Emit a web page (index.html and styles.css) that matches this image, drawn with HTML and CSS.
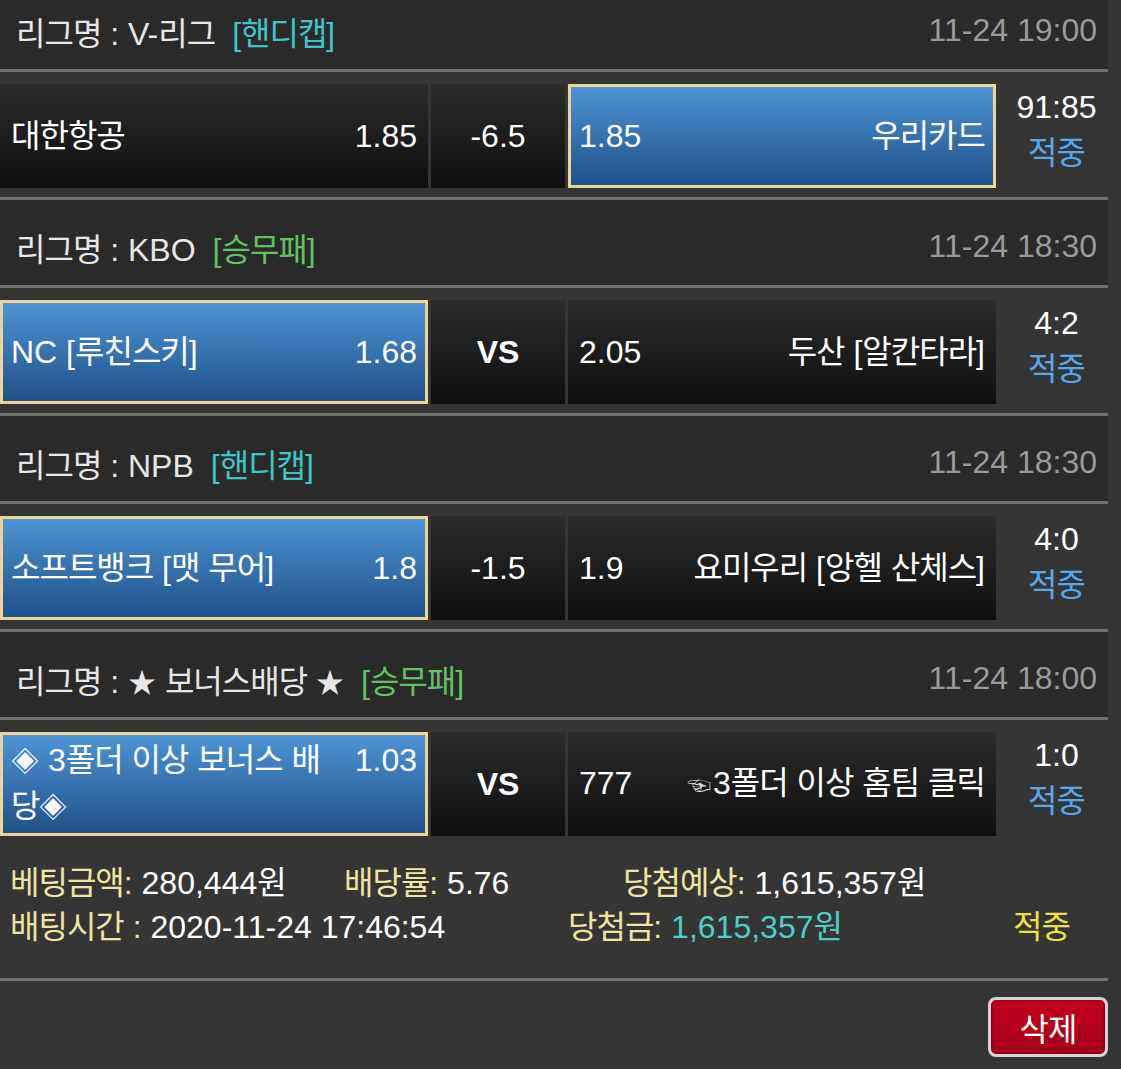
FILE: index.html
```html
<!DOCTYPE html>
<html lang="ko">
<head>
  <meta charset="UTF-8">
  <meta name="viewport" content="width=device-width, initial-scale=1.0">
  <title>베팅내역</title>
  <link rel="stylesheet" href="styles.css">
</head>
<body>
  <div class="slip">
    <div class="games">
      <div class="game">
        <div class="league">
          <span class="lname"><span class="k">리그명</span> : V-<span class="k">리그</span></span>
          <span class="kind hd">[<span class="k">핸디캡</span>]</span>
          <span class="time">11-24 19:00</span>
        </div>
        <div class="match">
          <div class="cell team">
            <div class="inner"><span class="name k">대한항공</span><span class="odds">1.85</span></div>
          </div>
          <div class="cell line">-6.5</div>
          <div class="cell team sel">
            <div class="inner"><span class="odds">1.85</span><span class="name k">우리카드</span></div>
          </div>
          <div class="result"><span class="score">91:85</span><span class="hit k">적중</span></div>
        </div>
      </div>

      <div class="game">
        <div class="league">
          <span class="lname"><span class="k">리그명</span> : KBO</span>
          <span class="kind wdl">[<span class="k">승무패</span>]</span>
          <span class="time">11-24 18:30</span>
        </div>
        <div class="match">
          <div class="cell team sel">
            <div class="inner"><span class="name">NC [<span class="k">루친스키</span>]</span><span class="odds">1.68</span></div>
          </div>
          <div class="cell line vs">VS</div>
          <div class="cell team">
            <div class="inner"><span class="odds">2.05</span><span class="name"><span class="k">두산</span> [<span class="k">알칸타라</span>]</span></div>
          </div>
          <div class="result"><span class="score">4:2</span><span class="hit k">적중</span></div>
        </div>
      </div>

      <div class="game">
        <div class="league">
          <span class="lname"><span class="k">리그명</span> : NPB</span>
          <span class="kind hd">[<span class="k">핸디캡</span>]</span>
          <span class="time">11-24 18:30</span>
        </div>
        <div class="match">
          <div class="cell team sel">
            <div class="inner"><span class="name"><span class="k">소프트뱅크</span> [<span class="k">맷</span> <span class="k">무어</span>]</span><span class="odds">1.8</span></div>
          </div>
          <div class="cell line">-1.5</div>
          <div class="cell team">
            <div class="inner"><span class="odds">1.9</span><span class="name"><span class="k">요미우리</span> [<span class="k">앙헬</span> <span class="k">산체스</span>]</span></div>
          </div>
          <div class="result"><span class="score">4:0</span><span class="hit k">적중</span></div>
        </div>
      </div>

      <div class="game">
        <div class="league">
          <span class="lname"><span class="k">리그명</span> : <span class="sym">★</span> <span class="k">보너스배당</span> <span class="sym">★</span></span>
          <span class="kind wdl">[<span class="k">승무패</span>]</span>
          <span class="time">11-24 18:00</span>
        </div>
        <div class="match">
          <div class="cell team sel">
            <div class="inner bonus"><span class="name"><span class="sym">◈</span> 3<span class="k">폴더</span> <span class="k">이상</span> <span class="k">보너스</span> <span class="k">배당</span><span class="sym">◈</span></span><span class="odds">1.03</span></div>
          </div>
          <div class="cell line vs">VS</div>
          <div class="cell team">
            <div class="inner"><span class="odds">777</span><span class="name"><span class="hand">☜</span>3<span class="k">폴더</span> <span class="k">이상</span> <span class="k">홈팀</span> <span class="k">클릭</span></span></div>
          </div>
          <div class="result"><span class="score">1:0</span><span class="hit k">적중</span></div>
        </div>
      </div>
    </div>

    <div class="summary">
      <div class="srow">
        <span class="c1"><span class="lbl"><span class="k">베팅금액</span>:</span> 280,444<span class="k">원</span></span>
        <span class="c2"><span class="lbl"><span class="k">배당률</span>:</span> 5.76</span>
        <span><span class="lbl"><span class="k">당첨예상</span>:</span> 1,615,357<span class="k">원</span></span>
      </div>
      <div class="srow">
        <span class="c3"><span class="lbl"><span class="k">배팅시간</span> :</span> 2020-11-24 17:46:54</span>
        <span class="c4"><span class="lbl"><span class="k">당첨금</span>:</span> <span class="teal">1,615,357<span class="k">원</span></span></span>
        <span class="yel k">적중</span>
      </div>
    </div>

    <div class="actions">
      <button class="del"><span class="k">삭제</span></button>
    </div>
  </div>
</body>
</html>
```

FILE: styles.css
```css
* { box-sizing: border-box; }
body {
  margin: 0;
  background: #353535;
  font-family: "Liberation Sans", "Noto Sans CJK KR", sans-serif;
  font-size: 32px;
  color: #fff;
  overflow: hidden;
}
.slip { width: 1108px; margin-top: -16px; }
.k { letter-spacing: -1px; }
.sym { font-size: 28px; }
.hand { font-size: 24px; margin-right: 2px; color: #ddd; }

/* league header */
.league {
  height: 88px;
  display: flex; align-items: center;
  padding: 8px 11px 0 16px;
  background: #2a2a2a;
  border-bottom: 3px solid #707070;
  color: #e6e6e6;
}
.kind { margin-left: 17px; }
.hd { color: #3fc5c6; }
.wdl { color: #64c064; }
.time { margin-left: auto; color: #9a9a9a; }

/* match row */
.match {
  display: flex; gap: 3px;
  height: 128px;
  padding: 12px 0 9px;
  border-bottom: 3px solid #707070;
}
.game:last-child .match { border-bottom: none; height: 125px; }
.cell {
  height: 104px;
  display: flex; align-items: center;
  padding: 0 8px;
  border: 3px solid transparent;
  background: linear-gradient(#2b2b2b, #0f0f0f) border-box;
}
.cell.sel {
  border-color: #eed597;
  background: linear-gradient(#4e96d7, #1d4f87) border-box;
}
.team { width: 428px; }
.line { width: 134px; justify-content: center; }
.vs { font-weight: bold; }
.inner {
  flex: 1;
  display: flex; justify-content: space-between; align-items: baseline;
  gap: 30px;
  line-height: 45px;
}
.inner.bonus { gap: 16px; }
.name { min-width: 0; }
.result {
  flex: 1;
  height: 104px;
  display: flex; flex-direction: column; align-items: center; justify-content: center;
  line-height: 46px;
  padding: 0 0 12px 6px;
}
.hit { color: #5aa7e8; }

/* summary */
.summary {
  padding: 16px 10px 29px;
  line-height: 44px;
  border-bottom: 3px solid #707070;
}
.srow { display: flex; white-space: nowrap; }
.lbl { color: #efe3a2; }
.c1 { width: 334px; }
.c2 { width: 279px; }
.c3 { width: 558px; }
.c4 { width: 445px; }
.teal { color: #4fcdc8; }
.yel { color: #efe23e; }

.actions { display: flex; justify-content: flex-end; padding-top: 16px; }
.del {
  width: 120px; height: 60px;
  padding: 0;
  border: 3px solid #d4d4d4; border-radius: 8px;
  background: linear-gradient(#c3001f, #a60019);
  box-shadow: inset 0 0 4px rgba(0,0,0,0.4);
  color: #fff;
  font: inherit;
  cursor: pointer;
}
```
